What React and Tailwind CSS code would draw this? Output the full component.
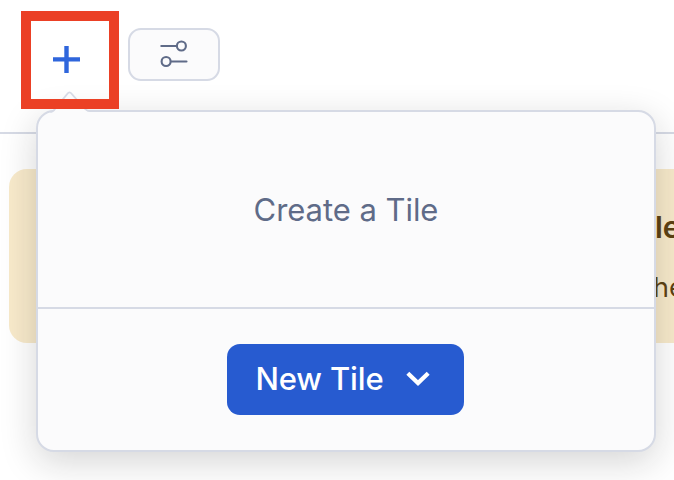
function AddButton() {
  return (
    <button aria-label="Add tile" className="flex h-[63px] w-[93px] items-center justify-center">
      <svg width="27" height="27" viewBox="0 0 27 27" stroke="#2f66dc" strokeWidth="4.4">
        <path d="M13.5 0v27M0 13.4h27" />
      </svg>
    </button>
  );
}

function FilterButton() {
  return (
    <button aria-label="Filters" className="flex h-[53px] w-[92px] items-center justify-center rounded-[13px] border-2 border-[#d6dae5] bg-[#fbfbfc]">
      <svg className="overflow-visible" width="28" height="28" viewBox="160 41 28 28" fill="none" stroke="#5f6b88" strokeWidth="2.1">
        <path d="M161.3 46h15.5M171 61.5h15.5" strokeLinecap="round" />
        <circle cx="181.4" cy="46" r="4.5" />
        <circle cx="166.1" cy="61.5" r="4.5" />
      </svg>
    </button>
  );
}

function TilePopover() {
  return (
    <section className="absolute left-[36px] top-[110px] flex h-[342px] w-[620px] flex-col rounded-[18px] border-2 border-[#d6dae5] bg-[#fbfbfc] shadow-[0_10px_36px_rgba(20,20,20,0.18)]">
      <svg className="absolute left-[11px] top-[-22px]" width="42" height="24" viewBox="0 0 42 24">
        <path d="M1 24V22Q4 22 6 20L20.5 2L37 20Q38 22 41 22V24Z" fill="#fbfbfc" />
        <path d="M1 22Q4 22 6 19L18.5 3.6Q20.5 1 22.5 3.6L36 19Q38 21 41 21" fill="none" stroke="#d6dae5" strokeWidth="1.7" />
      </svg>
      <div className="flex h-[197px] items-center justify-center border-b-2 border-[#d6dae5] pt-[2px]">
        <h2 className="text-[31px] tracking-[-0.05px] text-[#5f6b88]">Create a Tile</h2>
      </div>
      <div className="flex flex-1 items-center justify-center pr-[2px]">
        <button className="flex h-[71px] w-[237px] items-center gap-[23px] rounded-[13px] bg-[#275bd0] pl-[29px] text-[31px] font-medium tracking-[-0.15px] text-white">
          <span>New Tile</span>
          <svg className="mt-[-2px]" width="24" height="16" viewBox="0 0 24 16" fill="none" stroke="white" strokeWidth="4.2">
            <path d="M1.8 2.2L12 12L22.2 2.2" />
          </svg>
        </button>
      </div>
    </section>
  );
}

export default function App() {
  return (
    <div className="relative h-[480px] w-[674px] overflow-hidden bg-white font-['Inter',sans-serif]">
      <header className="flex h-[134px] gap-[8px] border-b-2 border-[#d6dae5] pl-[20px] pt-[28px]">
        <div className="w-[100px]"><AddButton /></div>
        <FilterButton />
      </header>
      <main className="pl-[9px] pt-[35px]">
        <div className="h-[174px] w-[900px] rounded-[18px] bg-[#f8eacb] pl-[646px] pt-[37px] text-[#5d4213]">
          <p className="text-[30px] font-semibold leading-[42px]">le</p>
          <p className="ml-[-2px] mt-[19px] text-[27px] leading-[42px]">he</p>
        </div>
      </main>
      <TilePopover />
      <div className="absolute left-[21px] top-[11px] h-[98px] w-[98px] border-[10px] border-[#eb4025]" />
    </div>
  );
}
